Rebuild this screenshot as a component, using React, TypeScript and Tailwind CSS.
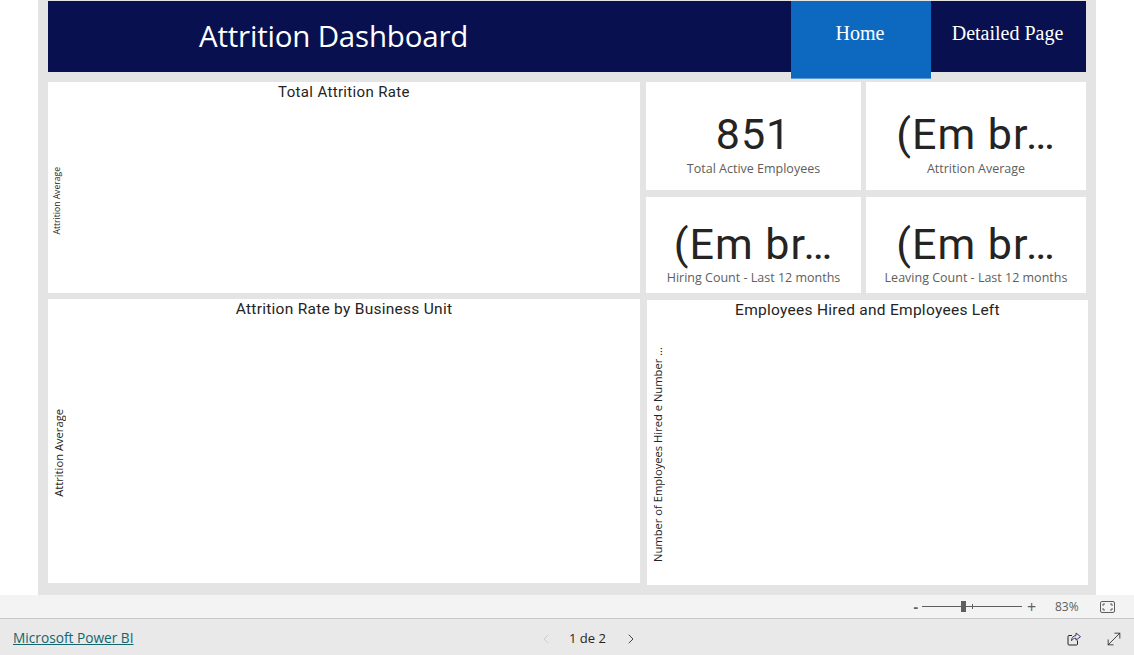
import { ChevronLeft, ChevronRight, MoveDiagonal } from "lucide-react";

const din = "font-['Roboto',sans-serif]";
const segoe = "font-['Open_Sans',sans-serif]";

// KPI card: big number with a caption under it
const Kpi = ({
  value,
  label,
  className,
  labelClass,
}: {
  value: string;
  label: string;
  className: string;
  labelClass: string;
}) => (
  <div className={`bg-white flex flex-col items-center ${className}`}>
    <div className={`${din} text-[43px] leading-[52px] tracking-[1px] text-[#252423]`}>{value}</div>
    <div className={`${segoe} text-[12.500px] leading-[16px] text-[#605e5c] whitespace-nowrap ${labelClass}`}>{label}</div>
  </div>
);

// Vertical axis label of an empty chart
const AxisLabel = ({ text, className }: { text: string; className: string }) => (
  <div className={`${segoe} [writing-mode:vertical-rl] rotate-180 whitespace-nowrap ${className}`}>{text}</div>
);

const ShareIcon = () => (
  <svg width="15" height="14" viewBox="0 0 15 14" fill="none" stroke="#252423" strokeWidth="1">
    <path d="M10.500 8.500v3.500a1 1 0 0 1-1 1H2a1 1 0 0 1-1-1V4.500a1 1 0 0 1 1-1h3" />
    <path d="M9 1l4.500 3.700L9 8.200V6.200c-2 0-3.500.8-4.500 2.600 0-3 1.500-5 4.500-5.200z" stroke="#3b3a6b" />
  </svg>
);

const FitIcon = () => (
  <svg width="15" height="12" viewBox="0 0 15 12" fill="none" stroke="#605e5c" strokeWidth="1">
    <rect x="0.500" y="0.500" width="14" height="11" rx="1.500" />
    <path d="M3 5V3h2M10 3h2v2M12 7v2h-2M5 9H3V7" />
  </svg>
);

export default function App() {
  return (
    <div className="w-[1134px] h-[655px] overflow-hidden bg-white flex flex-col">
      {/* --- Report canvas --- */}
      <div className="h-[595px] mx-[38px] w-[1058px] bg-[#e4e4e4] pl-[10px] pt-[1px] shrink-0">
        {/* --- Header --- */}
        <div className="w-[1038px] h-[71px] bg-[#08104f] flex items-start">
          <div className={`${segoe} w-[743px] pl-[151px] pt-[13px] text-[29.500px] leading-[44px] text-white tracking-[-0.2px] font-normal`}>
            Attrition Dashboard
          </div>
          <div className="w-[140px] h-[78px] bg-[#0d69c0] border-b border-[#5b9bd5] text-white text-center font-['Liberation_Serif',serif] text-[20px] leading-[26px] pt-[19px] pr-[2px] shrink-0">
            Home
          </div>
          <div className="w-[155px] pr-[2px] text-white text-center font-['Liberation_Serif',serif] text-[20px] leading-[26px] pt-[19px] whitespace-nowrap">
            Detailed Page
          </div>
        </div>

        <div className="flex mt-[10px]">
          {/* --- Left charts --- */}
          <div className="w-[592px] flex flex-col gap-[6px]">
            <div className="h-[211px] bg-white flex flex-col">
              <div className={`${din} text-center text-[15px] leading-[20px] tracking-[0.35px] text-[#252423]`}>Total Attrition Rate</div>
              <div className="pl-[5px] mt-[65px]">
                <AxisLabel text="Attrition Average" className="text-[8.600px] leading-[9px] text-[#252423]" />
              </div>
            </div>
            <div className="h-[284px] bg-white flex flex-col">
              <div className={`${din} text-center text-[15.500px] leading-[20px] tracking-[0.27px] text-[#252423]`}>Attrition Rate by Business Unit</div>
              <div className="pl-[4px] mt-[90px]">
                <AxisLabel text="Attrition Average" className="text-[11.200px] leading-[14px] text-[#252423]" />
              </div>
            </div>
          </div>

          {/* --- KPI cards and right chart --- */}
          <div className="ml-[6px] flex flex-col">
            <div className="grid grid-cols-[215px_220px] gap-x-[5px] gap-y-[7px]">
              <Kpi value="851" label="Total Active Employees" className="h-[108px] pt-[26px]" labelClass="mt-[1px]" />
              <Kpi value="(Em br…" label="Attrition Average" className="h-[108px] pt-[26px]" labelClass="mt-[1px]" />
              <Kpi value="(Em br…" label="Hiring Count - Last 12 months" className="h-[96px] pt-[21px]" labelClass="mt-0" />
              <Kpi value="(Em br…" label="Leaving Count - Last 12 months" className="h-[96px] pt-[21px]" labelClass="mt-0" />
            </div>
            <div className="h-[285px] w-[441px] ml-[1px] mt-[7px] bg-white flex flex-col">
              <div className={`${din} text-center text-[15.500px] leading-[20px] tracking-[0.27px] text-[#252423]`}>Employees Hired and Employees Left</div>
              <div className="pl-[4px] mt-[27px]">
                <AxisLabel text="Number of Employees Hired e Number ..." className="text-[11.200px] leading-[14px] text-[#252423]" />
              </div>
            </div>
          </div>
        </div>
      </div>

      {/* --- Zoom bar --- */}
      <div className={`${segoe} h-[24px] bg-[#f3f3f3] border-b border-[#c8c8c8] flex items-center justify-end text-[#605e5c] pr-[19px] shrink-0`}>
        <span className="text-[14px] font-bold leading-none mr-[4px]">-</span>
        <div className="relative w-[100px] h-[1px] bg-[#605e5c]">
          <div className="absolute left-[39px] -top-[5px] w-[5px] h-[11px] bg-[#605e5c]" />
          <div className="absolute left-[50px] -top-[2px] w-[1px] h-[5px] bg-[#605e5c]" />
        </div>
        <span className="text-[16px] leading-none ml-[5px] w-[10px]">+</span>
        <span className="text-[12px] ml-[18px] w-[24px]">83%</span>
        <span className="ml-[21px] flex"><FitIcon /></span>
      </div>

      {/* --- Bottom bar --- */}
      <div className="flex-1 bg-[#e9e9e9] flex items-center relative pl-[13px] pr-[10px] pt-[3px]">
        <a className={`${segoe} text-[13.700px] underline text-[#13666c] whitespace-nowrap`}>Microsoft Power BI</a>
        <div className="absolute left-[538px] flex items-center">
          <ChevronLeft size={16} strokeWidth={1.25} className="text-[#c8c6c4]" />
          <span className={`${segoe} text-[13px] font-medium text-[#252423] ml-[15px] mr-[17px]`}>1 de 2</span>
          <ChevronRight size={16} strokeWidth={1.25} className="text-[#252423]" />
        </div>
        <div className="ml-auto flex items-center gap-[22px]">
          <ShareIcon />
          <MoveDiagonal size={20} strokeWidth={1} className="text-[#252423]" />
        </div>
      </div>
    </div>
  );
}
